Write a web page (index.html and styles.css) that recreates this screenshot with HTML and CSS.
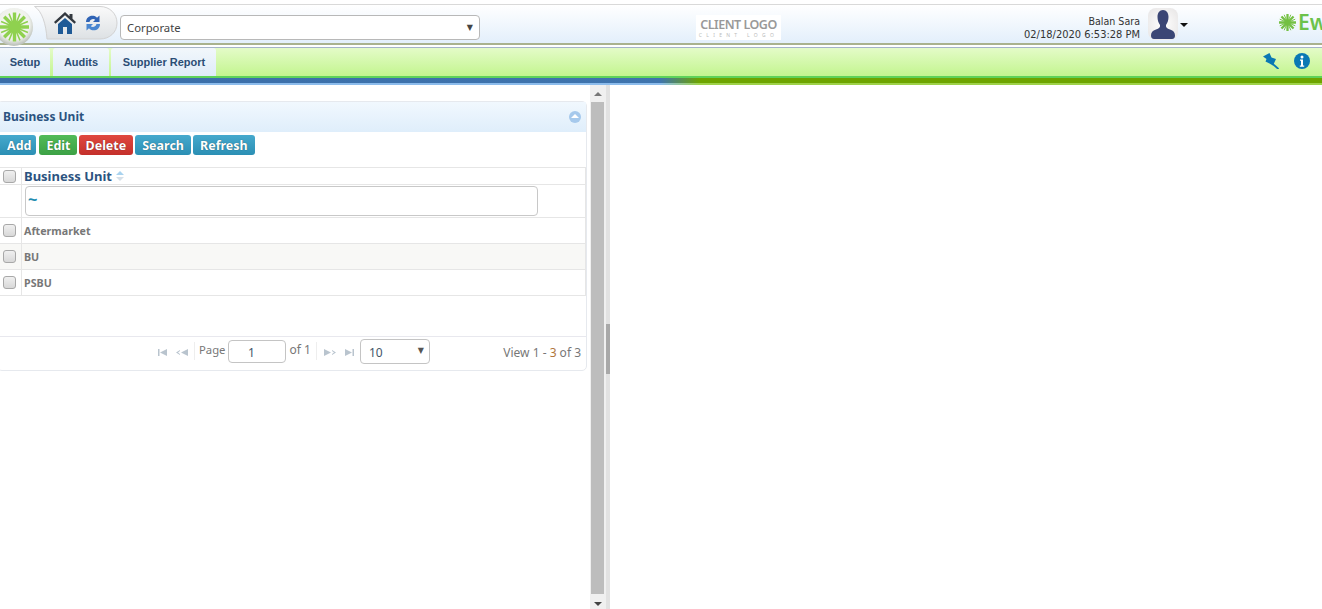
FILE: index.html
```html
<!DOCTYPE html>
<html lang="en">
<head>
<meta charset="utf-8">
<title>Business Unit</title>
<link rel="stylesheet" href="styles.css">
</head>
<body>
<header class="topbar">
  <div class="brand">
    <div class="quick">
      <svg class="quick-shape" width="84" height="34" viewBox="0 0 84 34">
        <defs><linearGradient id="tabfill" x1="0" y1="0" x2="0" y2="1"><stop offset="0" stop-color="#fafafa"/><stop offset="1" stop-color="#dde1e4"/></linearGradient></defs>
        <path d="M.5 .5H66C76 .5 83 8 83 17S76 33 66 33H13C12 18 8 5 .5 .5Z" fill="url(#tabfill)" stroke="#d2d2d2"/>
      </svg>
      <svg class="quick-icon" width="22" height="22" viewBox="0 0 22 22">
        <path d="M11 6 4 12V22H9V15H13V22H18V12z" fill="#1f5a96"/>
        <path d="M11 0 0 10 1.500 11.700 11 3.300 20.500 11.700 22 10 18.500 6.800V2H15.500V4.200z" fill="#33383f"/>
      </svg>
      <svg class="quick-icon" width="16" height="18" viewBox="0 0 16 18"><path d="M1 8C1 3.500 5 1 8.500 1.800c1.500.3 2.700 1 3.500 2L14.500 1.500V8H8l2.200-2.200C9 4.500 5.500 4.500 4.500 8z" fill="#2f63b5"/><path d="M15 10c0 4.500-4 7-7.500 6.200-1.500-.3-2.700-1-3.500-2L1.500 16.500V10H8l-2.200 2.200c1.200 1.300 4.700 1.300 5.700-2.200z" fill="#4a86d0"/></svg>
    </div>
    <svg class="brand-logo" width="36" height="44" viewBox="0 0 36 44">
      <defs><radialGradient id="orb" cx="50%" cy="42%" r="55%"><stop offset="0" stop-color="#fbfcf9"/><stop offset="0.75" stop-color="#eff1ec"/><stop offset="1" stop-color="#bfc4bd"/></radialGradient></defs>
      <circle cx="14" cy="22" r="19" fill="url(#orb)"/>
      <g stroke="#8fd14f" stroke-width="3.400">
        <path d="M14.500 22V7.500M14.500 22V36.500M14.500 22H0M14.500 22H29M14.500 22 4.200 11.700M14.500 22 24.800 32.300M14.500 22 24.800 11.700M14.500 22 4.200 32.300"/>
      </g>
      <g stroke="#8fd14f" stroke-width="1.500">
        <path d="M14.500 22 9 8.600M14.500 22 20 35.400M14.500 22 20 8.600M14.500 22 9 35.400M14.500 22 1.100 16.500M14.500 22 27.900 27.500M14.500 22 27.900 16.500M14.500 22 1.100 27.500"/>
      </g>
      <circle cx="14.500" cy="22" r="6.500" fill="#8fd14f"/>
    </svg>
  </div>
  <div class="org-select"><span>Corporate</span><span class="caret">▼</span></div>
  <div class="client-logo"><b>CLIENT LOGO</b><i>CLIENT LOGO</i></div>
  <div class="user">
    <div class="user-text"><div class="user-name">Balan Sara</div><div>02/18/2020 6:53:28 PM</div></div>
    <div class="avatar">
      <svg width="24" height="29" viewBox="0 0 24 29"><path d="M12 0c3.500 0 5.500 3 5.500 7 0 3-1 6-2.500 8-.5 2 1 3.500 4 4.500 3.500 1.200 5 3 5 6 0 2-1 3.500-3 3.500H3c-2 0-3-1.500-3-3.500 0-3 1.500-4.800 5-6 3-1 4.500-2.500 4-4.500-1.500-2-2.500-5-2.500-8 0-4 2-7 5.500-7z" fill="#3b4675"/></svg>
    </div>
    <span class="user-caret"></span>
  </div>
  <div class="ew-logo">
    <svg width="17" height="17" viewBox="0 0 18 18"><g stroke="#74c043" stroke-width="2.400"><path d="M9 0V18M0 9H18M2.600 2.600 15.400 15.400M15.400 2.600 2.600 15.400"/></g><g stroke="#74c043" stroke-width="1"><path d="M5.500 .800 12.500 17.200M12.500 .800 5.500 17.200M.800 5.500 17.200 12.500M17.200 5.500 .800 12.500"/></g></svg>
    <span>Ew</span>
  </div>
</header>
<div class="rule-olive"></div>
<nav class="menubar">
  <a class="tab tab-first">Setup</a>
  <a class="tab tab-mid">Audits</a>
  <a class="tab tab-last">Supplier Report</a>
  <div class="menu-icons">
    <svg width="16" height="16" viewBox="0 0 16 16"><path d="M0 3.500 6.500 0 8.500 4.500 13 6 10 12.500 6.500 10.500 2.500 8.500 3.500 6z" fill="#0a78b4"/><path d="M8 9.500 15.500 16" stroke="#0a78b4" stroke-width="1.800"/></svg>
    <svg width="16" height="16" viewBox="0 0 16 16"><circle cx="8" cy="8" r="8" fill="#0a78b4"/><circle cx="8" cy="4" r="1.500" fill="#fff"/><path d="M6 6.500h3v6h1.200v1.200H5.800v-1.200H7V7.700H6z" fill="#fff"/></svg>
  </div>
</nav>
<div class="stripe"></div>
<main class="workspace">
  <section class="left-pane">
    <div class="panel">
      <div class="panel-title">
        <h2>Business Unit</h2>
        <span class="collapse"></span>
      </div>
      <div class="toolbar">
        <button class="btn btn-blue btn-add">Add</button>
        <button class="btn btn-green btn-edit">Edit</button>
        <button class="btn btn-red">Delete</button>
        <button class="btn btn-blue">Search</button>
        <button class="btn btn-blue">Refresh</button>
      </div>
      <div class="grid">
        <div class="row row-head">
          <div class="cell-check"><span class="check"></span></div>
          <div class="cell-main head-label">Business Unit
            <svg width="8" height="10" viewBox="0 0 8 10"><path d="M4 0 8 4H0z" fill="#a9d3ef"/><path d="M4 10 0 6H8z" fill="#d5dfe8"/></svg>
          </div>
        </div>
        <div class="row row-filter">
          <div class="cell-check"></div>
          <div class="cell-main"><div class="filter-input">~</div></div>
        </div>
        <div class="row row-data">
          <div class="cell-check"><span class="check"></span></div>
          <div class="cell-main">Aftermarket</div>
        </div>
        <div class="row row-data row-alt">
          <div class="cell-check"><span class="check"></span></div>
          <div class="cell-main">BU</div>
        </div>
        <div class="row row-data">
          <div class="cell-check"><span class="check"></span></div>
          <div class="cell-main">PSBU</div>
        </div>
      </div>
      <div class="pager">
        <div class="pager-center">
          <span class="pg-icon"><svg width="9" height="7" viewBox="0 0 9 7"><path d="M0 0h1.500v7H0zM2 3.500 9 0v7z" fill="#b9c4ce"/></svg></span>
          <span class="pg-icon"><svg width="12" height="7" viewBox="0 0 12 7"><path d="M0 3.500 4 1v1L2 3.500 4 5v1zM5 3.500 12 0v7z" fill="#b9c4ce"/></svg></span>
          <span class="pg-sep"></span>
          <span class="pg-text pg-page">Page</span>
          <div class="pg-input">1</div>
          <span class="pg-text">of 1</span>
          <span class="pg-sep pg-sep-right"></span>
          <span class="pg-icon pg-next"><svg width="12" height="7" viewBox="0 0 12 7"><path d="M0 0 7 3.500 0 7zM8 1l4 2.500L8 6V5l2-1.500L8 2z" fill="#b9c4ce"/></svg></span>
          <span class="pg-icon pg-last"><svg width="9" height="7" viewBox="0 0 9 7"><path d="M0 0 7 3.500 0 7zM7.500 0H9v7H7.500z" fill="#b9c4ce"/></svg></span>
          <div class="pg-size"><span>10</span><span class="pg-caret">▼</span></div>
        </div>
        <div class="pg-view">View 1 - <em>3</em> of 3</div>
      </div>
    </div>
  </section>
  <div class="scrollbar">
    <span class="arrow arrow-up"></span>
    <div class="thumb"></div>
    <span class="arrow arrow-down"></span>
  </div>
  <div class="splitter"><span class="grip"></span></div>
  <section class="right-pane"></section>
</main>
</body>
</html>
```
FILE: styles.css
```css
* { box-sizing: border-box; }
html, body { margin: 0; padding: 0; height: 609px; overflow: hidden; background: #fff; }
body { font-family: "Liberation Sans", Arial, sans-serif; color: #333; }

.topbar {
  height: 39px;
  margin-top: 4px;
  border-top: 1px solid #d9d9d9;
  background: linear-gradient(#fff, #e3effb);
  display: flex;
  align-items: flex-start;
  position: relative;
}
.brand { width: 120px; height: 38px; position: relative; flex: none; }
.brand-logo { position: absolute; left: 0; top: 0; z-index: 2; }
.quick {
  position: absolute; left: 34px; top: 1px;
  width: 84px; height: 34px;
  display: flex; align-items: center; gap: 9px;
  padding: 0 0 1px 20px;
}
.quick-shape { position: absolute; left: 0; top: 0; }
.quick-icon { position: relative; flex: none; }
.org-select {
  width: 360px; height: 25px; margin-top: 10px;
  border: 1px solid #b8b8b8; border-radius: 4px;
  background: #fff;
  display: flex; justify-content: space-between; align-items: center;
  padding: 0 6px;
  font: 11.300px "Noto Sans", sans-serif; color: #444;
}
.caret { font: 8px "DejaVu Sans", sans-serif; color: #444; }
.client-logo {
  margin: 10px 0 0 216px;
  width: 85px; height: 25px;
  background: #fff;
  display: flex; flex-direction: column; align-items: center;
  font-family: "Noto Sans", sans-serif; color: #999;
  padding-top: 3px;
}
.client-logo b { font-size: 12.500px; line-height: 14px; font-weight: 600; letter-spacing: -.5px; }
.client-logo i { font-size: 5px; line-height: 6px; font-style: normal; letter-spacing: 4.300px; color: #bbb; }
.user { position: absolute; right: 134px; top: 3px; display: flex; align-items: flex-start; }
.user-text {
  text-align: right;
  font: 11px/14px "DejaVu Sans", sans-serif; font-stretch: condensed; color: #333;
  padding-top: 7px; margin-right: 8px;
}
.user-name { font-size: 10.600px; line-height: 13px; }
.avatar {
  width: 30px; height: 32px; border-radius: 8px;
  background: radial-gradient(#fff, #e6e4e4);
  display: flex; justify-content: center; align-items: center;
}
.user-caret {
  margin: 15px 0 0 2px;
  border: 4px solid transparent; border-top: 4px solid #111; border-bottom: 0;
  width: 0; height: 0;
}
.ew-logo {
  position: absolute; left: 1279px; top: 4px; width: 43px; overflow: hidden;
  display: flex; align-items: center; gap: 2px;
  font: 600 21px/26px "Noto Sans", sans-serif; color: #6cc24a;
}
.ew-logo svg { flex: none; }

.rule-olive { height: 4px; border-top: 2px solid #a9b28e; background: #fff; }

.menubar {
  height: 31px;
  border-top: 1px solid #a5b4c9;
  border-bottom: 2px solid #5ed25a;
  background: linear-gradient(#e4fbc8, #c3f58f);
  display: flex; align-items: stretch;
}
.tab {
  font: bold 11px/28px "Liberation Sans", sans-serif;
  color: #2b4d75;
  background: linear-gradient(#f2f7fb, #dfecf9);
  border-radius: 3px 3px 0 0;
  margin-right: 2px;
  text-align: center;
}
.tab-first { width: 50px; border-radius: 0 3px 0 0; margin-right: 3px; }
.tab-mid { width: 56px; }
.tab-last { width: 105px; margin: 0; padding-left: 1px; }
.menu-icons { margin-left: auto; display: flex; align-items: center; gap: 15px; padding: 0 12px 3px 0; }

.stripe {
  height: 7px;
  background:
    linear-gradient(90deg, #3a6da8 0, #3f74ad 660px, #6ea400 700px) top / 100% 5px no-repeat,
    linear-gradient(90deg, #8cbcec 0, #8cbcec 660px, #9ed24a 700px) bottom / 100% 2px no-repeat;
}

.workspace { height: 524px; display: flex; background: #fff; }
.left-pane { width: 590px; flex: none; padding: 16px 3px 0 0; overflow: hidden; }
.panel {
  margin-left: -3px;
  height: 270px;
  border: 1px solid #e6e9ee;
  border-radius: 5px;
  background: #fff;
  display: flex; flex-direction: column;
}
.panel-title {
  height: 30px; flex: none;
  background: linear-gradient(#f1f8fe, #dfeefb);
  display: flex; align-items: center; justify-content: space-between;
  padding: 0 5px 0 5px;
}
.panel-title h2 { margin: 0 0 2px; font: bold 12px "Noto Sans", sans-serif; color: #2b5380; }
.collapse {
  width: 12px; height: 12px; border-radius: 50%; background: #a6c9ec; position: relative;
}
.collapse::after {
  content: ""; position: absolute; left: 2px; top: 3px;
  border: 4px solid transparent; border-top: 0; border-bottom: 4px solid #fff;
}
.toolbar { display: flex; gap: 2px; padding: 3px 0 0 0; height: 35px; flex: none; }
.btn {
  height: 20px; border: 0; border-radius: 3px; padding: 1px 7px 0;
  font: bold 12.500px/19px "Noto Sans", sans-serif; color: #fff;
  text-shadow: 0 0 1px rgba(0,0,0,.5);
}
.btn-blue { background: linear-gradient(#46a9cd, #2b8fb4); }
.btn-green { background: linear-gradient(#52bb58, #3ca145); }
.btn-red { background: linear-gradient(#e0483f, #c4302b); }
.btn-add { padding: 1px 5px 0 9px; margin-right: 1px; }
.btn-edit { padding: 1px 6px 0 7px; }

.grid { flex: none; border-top: 1px solid #e6e6e6; border-right: 1px solid #e6e6e6; }
.row { display: flex; border-bottom: 1px solid #e6e6e6; }
.cell-check {
  width: 24px; flex: none; border-right: 1px solid #e6e6e6;
  display: flex; align-items: center; justify-content: center;
}
.cell-main { flex: 1; display: flex; align-items: center; padding-left: 2px; }
.row-head { height: 17px; }
.head-label { font: bold 13px "Noto Sans", sans-serif; color: #2b5380; gap: 4px; }
.row-filter { height: 33px; }
.row-filter .cell-main { padding-left: 3px; }
.filter-input {
  width: 513px; height: 30px; border: 1px solid #c8c8c8; border-radius: 4px;
  font: bold 16px/26px "Liberation Sans", sans-serif; color: #1f8cb0; padding-left: 2px; background: #fff;
}
.row-data { height: 26px; font: bold 10.700px "Noto Sans", sans-serif; color: #777; }
.row-alt { background: #f8f8f6; }
.check {
  width: 13px; height: 13px; border: 1px solid #a8a8a8; border-radius: 3px;
  background: linear-gradient(#f0f0f0, #d8d8d8);
  display: block;
}

.pager {
  margin-top: 40px; height: 35px; flex: none;
  border-top: 1px solid #e8e8ee;
  display: flex; align-items: center; justify-content: flex-end;
  position: relative; padding: 0 5px 4px 0;
  font: 12px "Noto Sans", sans-serif; color: #777;
}
.pager-center {
  position: absolute; left: 160px; top: 1px; height: 26px;
  display: flex; align-items: center;
}
.pg-icon { width: 18px; display: flex; align-items: center; justify-content: flex-start; padding-top: 2px; }
.pg-sep { width: 1px; height: 18px; background: #eee; margin-right: 4px; }
.pg-sep-right { margin: 0 7px 0 2px; }
.pg-next { width: 21px; }
.pg-last { width: 15px; }
.pg-text { margin-right: 3px; position: relative; top: -2px; }
.pg-page { font-size: 11.300px; margin-right: 2px; }
.pg-input {
  width: 58px; height: 23px; border: 1px solid #c4c4c4; border-radius: 4px;
  text-align: center; line-height: 24px; color: #44566a; margin-right: 4px; padding-right: 10px;
}
.pg-size {
  width: 70px; height: 25px; border: 1px solid #c4c4c4; border-radius: 4px;
  display: flex; justify-content: space-between; align-items: center;
  padding: 2px 5px 0 8px; color: #44566a;
}
.pg-caret { font: 8px "DejaVu Sans", sans-serif; color: #555; position: relative; top: -2px; }
.pg-view em { font-style: normal; color: #b0763c; }

.scrollbar {
  width: 16px; flex: none; background: #f0f0f0;
  display: flex; flex-direction: column; align-items: center;
  padding: 0 2px 0 1px;
}
.arrow { width: 0; height: 0; border: 4px solid transparent; flex: none; }
.arrow-up { border-top: 0; border-bottom: 4px solid #777; margin-top: 7px; }
.arrow-down { border-bottom: 0; border-top: 4px solid #444; margin: 8px 0 3px; }
.thumb { flex: 1; width: 100%; background: #bdbdbd; margin-top: 6px; }
.splitter { width: 4px; flex: none; background: #e2e2e2; display: flex; align-items: flex-start; padding-top: 239px; }
.grip { display: block; width: 100%; height: 50px; background: #a9a9a9; }
.right-pane { flex: 1; background: #fff; }
```
